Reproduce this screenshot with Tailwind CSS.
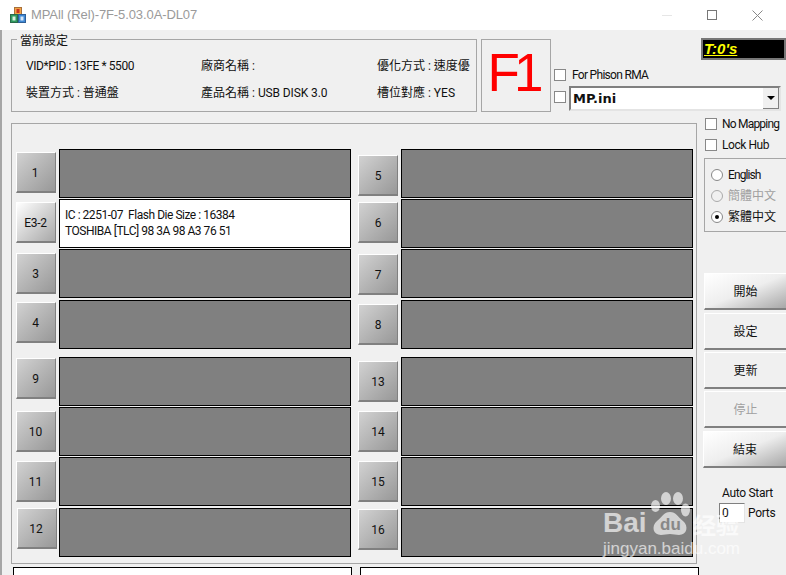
<!DOCTYPE html>
<html lang="zh-Hant">

<head>
    <meta charset="UTF-8">
    <title>MPAll</title>
    <script src="https://cdn.jsdelivr.net/npm/@tailwindcss/browser@4"></script>
</head>

<body class="relative w-[786px] h-[575px] overflow-hidden bg-[#f0f0f0] text-[12px] text-[#111] font-['Roboto','Noto_Sans_CJK_TC',sans-serif]">
    <!-- Title bar -->
    <div class="h-[30px] bg-white flex items-center">
        <svg class="ml-[10px] w-[16px] h-[16px]" viewBox="0 0 16 16">
            <rect x="4.500" y="0.500" width="7" height="7" fill="#f2a344" stroke="#a8703a" />
            <rect x="0.500" y="7.500" width="7" height="8" fill="#2f9a5e" stroke="#2a6a4a" />
            <rect x="8.500" y="7.500" width="7" height="8" fill="#3f88d4" stroke="#2f5f96" />
            <rect x="6.500" y="2" width="3" height="4" fill="#c8321e" />
            <rect x="2.500" y="9.500" width="3" height="4" fill="#d8f0e0" />
            <rect x="10.500" y="9.500" width="3" height="4" fill="#d8e8f8" />
        </svg>
        <span class="ml-[5px] text-[13px] tracking-[-0.1px] text-[#9a9a9a] font-['Liberation_Sans',sans-serif]">MPAll (Rel)-7F-5.03.0A-DL07</span>
        <div class="ml-auto flex items-center">
            <div class="w-[10px] h-px bg-[#e6e6e6] mr-[35px]"></div>
            <div class="w-[10px] h-[10px] border border-[#777] mr-[35px]"></div>
            <svg class="w-[11px] h-[11px] mr-[23px]" viewBox="0 0 11 11" fill="none" stroke="#888"><path d="M.5.5l10 10M10.500.5l-10 10" /></svg>
        </div>
    </div>

    <!-- Current settings row -->
    <div class="flex ml-[11px] mt-[9px] h-[73px]">
        <div class="relative w-[466px] border border-[#a6a6a6]">
            <span class="absolute left-[5px] top-[-7px] bg-[#f0f0f0] px-[3px] leading-[16px]">當前設定</span>
            <div class="grid grid-cols-[175px_176px_1fr] grid-rows-2 h-full pl-[14px] pt-[13px] pb-[5px] items-center">
                <span class="tracking-[-0.4px]">VID*PID : 13FE * 5500</span><span>廠商名稱 :</span><span>優化方式 : 速度優</span>
                <span>裝置方式 : 普通盤</span><span>產品名稱 : <span class="tracking-[-0.1px]">USB DISK 3.0</span></span><span>槽位對應 : YES</span>
            </div>
        </div>
        <div class="ml-[4px] w-[70px] border border-[#a6a6a6] flex items-center justify-center pb-[7px] pr-[7px] text-[53px] tracking-[-6px] leading-none text-[#ff0000] font-['Liberation_Sans',sans-serif]">F1</div>
        <div class="ml-[3px] w-[232px] flex flex-col">
            <div class="flex justify-end -mt-px">
                <div class="w-[85px] h-[22px] bg-black border-2 border-[#777] pl-[1px] text-[15px] leading-[18px] font-bold italic text-[#ffff00] font-['Liberation_Sans',sans-serif]"><span class="underline">T:0's</span></div>
            </div>
            <div class="flex items-center mt-[9px] h-[12px]">
                <div class="w-[12px] h-[12px] bg-white border border-[#888]"></div>
                <span class="ml-[6px] tracking-[-0.7px] leading-[14px]">For Phison RMA</span>
            </div>
            <div class="flex items-start mt-[5px]">
                <div class="w-[12px] h-[12px] mt-[5px] bg-white border border-[#888]"></div>
                <div class="ml-[3px] w-[212px] h-[25px] bg-white border-2 border-t-[#808080] border-l-[#808080] border-r-[#e4e4e4] border-b-[#e4e4e4] flex items-center justify-between">
                    <span class="ml-[2px] text-[13px] font-bold font-['DejaVu_Sans',sans-serif]">MP.ini</span>
                    <div class="w-[16px] h-[21px] bg-[#f0f0f0] border-r border-b border-[#808080] flex items-center justify-center">
                        <div class="w-0 h-0 border-x-[4px] border-x-transparent border-t-[4px] border-t-black"></div>
                    </div>
                </div>
            </div>
        </div>
    </div>

    <!-- Main area -->
    <div class="flex ml-[11px] mt-[11px]">
        <div class="w-[686px] h-[441px] border border-[#a6a6a6] pt-[25px] pl-[4px] flex">
            <!-- Left slots -->
            <div class="w-[342px]">
                <div class="flex h-[50px]">
                    <div class="w-[40px] h-[41px] mt-[3px] pt-[1px] pr-[2px] bg-linear-to-br from-[#d2d2d2] to-[#989898] border border-b-2 border-t-white border-l-white border-r-[#808080] border-b-[#808080] flex items-center justify-center">1</div>
                    <div class="ml-[3px] w-[292px] h-[49px] bg-[#808080] border border-black"></div>
                </div>
                <div class="flex h-[50px]">
                    <div class="w-[40px] h-[41px] mt-[3px] pt-[1px] pr-[1px] bg-linear-to-br from-[#ffffff] to-[#a8a8a8] border border-b-2 border-t-white border-l-white border-r-[#808080] border-b-[#808080] flex items-center justify-center tracking-[-0.3px]">E3-2</div>
                    <div class="ml-[3px] w-[292px] h-[49px] bg-white border border-black pl-[5px] pt-[7px] leading-[16px] tracking-[-0.47px]">IC : 2251-07&nbsp;&nbsp;Flash Die Size : 16384<br>TOSHIBA [TLC] 98 3A 98 A3 76 51</div>
                </div>
                <div class="flex h-[51px]">
                    <div class="w-[40px] h-[41px] mt-[4px] pt-[1px] pr-[1px] bg-linear-to-br from-[#d2d2d2] to-[#989898] border border-b-2 border-t-white border-l-white border-r-[#808080] border-b-[#808080] flex items-center justify-center">3</div>
                    <div class="ml-[3px] w-[292px] h-[49px] bg-[#808080] border border-black"></div>
                </div>
                <div class="flex h-[57px]">
                    <div class="w-[40px] h-[41px] mt-[2px] pt-[1px] pr-[1px] bg-linear-to-br from-[#d2d2d2] to-[#989898] border border-b-2 border-t-white border-l-white border-r-[#808080] border-b-[#808080] flex items-center justify-center">4</div>
                    <div class="ml-[3px] w-[292px] h-[49px] bg-[#808080] border border-black"></div>
                </div>
                <div class="flex h-[50px]">
                    <div class="w-[40px] h-[41px] mt-[1px] pt-[1px] pr-[1px] bg-linear-to-br from-[#d2d2d2] to-[#989898] border border-b-2 border-t-white border-l-white border-r-[#808080] border-b-[#808080] flex items-center justify-center">9</div>
                    <div class="ml-[3px] w-[292px] h-[49px] bg-[#808080] border border-black"></div>
                </div>
                <div class="flex h-[50px]">
                    <div class="w-[40px] h-[41px] mt-[4px] pt-[1px] pr-[1px] bg-linear-to-br from-[#d2d2d2] to-[#989898] border border-b-2 border-t-white border-l-white border-r-[#808080] border-b-[#808080] flex items-center justify-center">10</div>
                    <div class="ml-[3px] w-[292px] h-[49px] bg-[#808080] border border-black"></div>
                </div>
                <div class="flex h-[51px]">
                    <div class="w-[40px] h-[41px] mt-[4px] pt-[1px] pr-[1px] bg-linear-to-br from-[#d2d2d2] to-[#989898] border border-b-2 border-t-white border-l-white border-r-[#808080] border-b-[#808080] flex items-center justify-center">11</div>
                    <div class="ml-[3px] w-[292px] h-[49px] bg-[#808080] border border-black"></div>
                </div>
                <div class="flex h-[50px]">
                    <div class="w-[40px] h-[41px] ml-px pt-[1px] pr-[2px] bg-linear-to-br from-[#d2d2d2] to-[#989898] border border-b-2 border-t-white border-l-white border-r-[#808080] border-b-[#808080] flex items-center justify-center">12</div>
                    <div class="ml-[2px] w-[292px] h-[49px] bg-[#808080] border border-black"></div>
                </div>
            </div>
            <!-- Right slots -->
            <div class="w-[335px]">
                <div class="flex h-[50px]">
                    <div class="w-[40px] h-[41px] mt-[6px] pt-[1px] bg-linear-to-br from-[#d2d2d2] to-[#989898] border border-b-2 border-t-white border-l-white border-r-[#808080] border-b-[#808080] flex items-center justify-center">5</div>
                    <div class="ml-[3px] w-[292px] h-[49px] bg-[#808080] border border-black"></div>
                </div>
                <div class="flex h-[50px]">
                    <div class="w-[40px] h-[41px] mt-[3px] pt-[1px] bg-linear-to-br from-[#d2d2d2] to-[#989898] border border-b-2 border-t-white border-l-white border-r-[#808080] border-b-[#808080] flex items-center justify-center">6</div>
                    <div class="ml-[3px] w-[292px] h-[49px] bg-[#808080] border border-black"></div>
                </div>
                <div class="flex h-[51px]">
                    <div class="w-[40px] h-[41px] mt-[5px] pt-[1px] bg-linear-to-br from-[#d2d2d2] to-[#989898] border border-b-2 border-t-white border-l-white border-r-[#808080] border-b-[#808080] flex items-center justify-center">7</div>
                    <div class="ml-[3px] w-[292px] h-[49px] bg-[#808080] border border-black"></div>
                </div>
                <div class="flex h-[57px]">
                    <div class="w-[40px] h-[41px] mt-[4px] pt-[1px] bg-linear-to-br from-[#d2d2d2] to-[#989898] border border-b-2 border-t-white border-l-white border-r-[#808080] border-b-[#808080] flex items-center justify-center">8</div>
                    <div class="ml-[3px] w-[292px] h-[49px] bg-[#808080] border border-black"></div>
                </div>
                <div class="flex h-[50px]">
                    <div class="w-[40px] h-[41px] mt-[4px] pt-[1px] bg-linear-to-br from-[#d2d2d2] to-[#989898] border border-b-2 border-t-white border-l-white border-r-[#808080] border-b-[#808080] flex items-center justify-center">13</div>
                    <div class="ml-[3px] w-[292px] h-[49px] bg-[#808080] border border-black"></div>
                </div>
                <div class="flex h-[50px]">
                    <div class="w-[40px] h-[41px] mt-[4px] pt-[1px] bg-linear-to-br from-[#d2d2d2] to-[#989898] border border-b-2 border-t-white border-l-white border-r-[#808080] border-b-[#808080] flex items-center justify-center">14</div>
                    <div class="ml-[3px] w-[292px] h-[49px] bg-[#808080] border border-black"></div>
                </div>
                <div class="flex h-[51px]">
                    <div class="w-[40px] h-[41px] mt-[4px] pt-[1px] bg-linear-to-br from-[#d2d2d2] to-[#989898] border border-b-2 border-t-white border-l-white border-r-[#808080] border-b-[#808080] flex items-center justify-center">15</div>
                    <div class="ml-[3px] w-[292px] h-[49px] bg-[#808080] border border-black"></div>
                </div>
                <div class="flex h-[50px]">
                    <div class="w-[40px] h-[41px] mt-[1px] pt-[1px] bg-linear-to-br from-[#d2d2d2] to-[#989898] border border-b-2 border-t-white border-l-white border-r-[#808080] border-b-[#808080] flex items-center justify-center">16</div>
                    <div class="ml-[3px] w-[292px] h-[49px] bg-[#808080] border border-black"></div>
                </div>
            </div>
        </div>

        <!-- Right column -->
        <div class="ml-[7px] w-[82px] -mt-[5px]">
            <div class="flex items-center h-[12px] ml-px">
                <div class="w-[12px] h-[12px] shrink-0 bg-white border border-[#888]"></div>
                <span class="ml-[5px] whitespace-nowrap tracking-[-0.8px]">No Mapping</span>
            </div>
            <div class="flex items-center h-[12px] ml-px mt-[9px]">
                <div class="w-[12px] h-[12px] shrink-0 bg-white border border-[#888]"></div>
                <span class="ml-[5px] whitespace-nowrap tracking-[-0.45px]">Lock Hub</span>
            </div>
            <div class="mt-[7px] h-[74px] border border-[#a6a6a6] border-r-0 pl-[6px] pt-[9px] flex flex-col gap-[8px]">
                <div class="flex items-center h-[13px]"><div class="w-[12px] h-[12px] shrink-0 rounded-full bg-white border border-[#888]"></div><span class="ml-[5px] tracking-[-0.9px]">English</span></div>
                <div class="flex items-center h-[13px] text-[#a0a0a0]"><div class="w-[12px] h-[12px] shrink-0 rounded-full bg-[#f0f0f0] border border-[#aaa]"></div><span class="ml-[5px]">簡體中文</span></div>
                <div class="flex items-center h-[13px]"><div class="w-[12px] h-[12px] shrink-0 rounded-full bg-white border border-[#888] flex items-center justify-center"><div class="w-[4px] h-[4px] rounded-full bg-black"></div></div><span class="ml-[5px]">繁體中文</span></div>
            </div>
            <div class="mt-[41px] flex flex-col">
                <div class="h-[37px] pt-[1px] bg-linear-to-br from-[#ffffff] via-[#eeeeee] to-[#a8a8a8] border-t border-l border-t-white border-l-white border-b-2 border-b-[#808080] flex items-center justify-center">開始</div>
                <div class="mt-[3px] h-[37px] pt-[1px] border-t border-l border-t-white border-l-white border-b-2 border-b-[#808080] flex items-center justify-center">設定</div>
                <div class="mt-[2px] h-[37px] pt-[1px] border-t border-l border-t-white border-l-white border-b-2 border-b-[#808080] flex items-center justify-center">更新</div>
                <div class="mt-[2px] h-[37px] pt-[1px] border-t border-l border-t-white border-l-white border-b-2 border-b-[#808080] flex items-center justify-center text-[#a0a0a0]">停止</div>
                <div class="mt-[3px] -ml-px h-[37px] pt-[1px] bg-linear-to-br from-[#ffffff] via-[#eeeeee] to-[#a8a8a8] border-t border-l border-t-white border-l-white border-b-2 border-b-[#808080] flex items-center justify-center">結束</div>
            </div>
            <div class="mt-[18px] ml-[18px] leading-[14px] tracking-[-0.3px] whitespace-nowrap">Auto Start</div>
            <div class="flex items-center ml-[15px] mt-[3px]">
                <div class="w-[26px] h-[20px] bg-white border border-t-[#808080] border-l-[#808080] border-r-[#e4e4e4] border-b-[#e4e4e4] pl-[2px] leading-[18px]">0</div>
                <span class="ml-[3px] tracking-[-0.3px]">Ports</span>
            </div>
        </div>
    </div>

    <!-- Bottom log boxes -->
    <div class="flex ml-[13px] mt-[3px]">
        <div class="w-[339px] h-[30px] bg-white border border-black"></div>
        <div class="ml-[8px] w-[339px] h-[30px] bg-white border border-black"></div>
    </div>

    <!-- Window left edge -->
    <div class="absolute left-0 top-[30px] bottom-0 w-[2px] bg-[#a6a6a6]"></div>

    <!-- Watermark -->
    <div class="absolute left-[603px] top-[490px] w-[150px] h-[70px] text-white/65 font-['Liberation_Sans',sans-serif]">
        <span class="absolute left-0 top-[17px] text-[28px] leading-[32px] font-bold">Bai</span>
        <svg class="absolute left-[47px] top-0 w-[42px] h-[46px]" viewBox="0 0 42 46" fill="#fff" fill-opacity=".65">
            <ellipse cx="5.500" cy="16" rx="4.500" ry="6" />
            <ellipse cx="16" cy="8.500" rx="5" ry="6.500" />
            <ellipse cx="28" cy="8.500" rx="5" ry="6.500" />
            <ellipse cx="35.500" cy="20" rx="4.500" ry="6.500" />
            <path d="M20 22c6 0 8 5 13 9 6 5 4 14-4 14-3 0-6-1-9-1s-6 1-9 1c-8 0-10-9-4-14 5-4 7-9 13-9z" />
        </svg>
        <span class="absolute left-[57px] top-[26px] text-[17px] leading-[18px] font-bold text-[#888]">du</span>
        <span class="absolute left-[90px] top-[21px] text-[23px] leading-[26px] font-bold font-['Noto_Sans_CJK_SC',sans-serif]">经验</span>
        <span class="absolute left-0 top-[49px] text-[17px] leading-[20px] whitespace-nowrap">jingyan.baidu.com</span>
    </div>
</body>

</html>
